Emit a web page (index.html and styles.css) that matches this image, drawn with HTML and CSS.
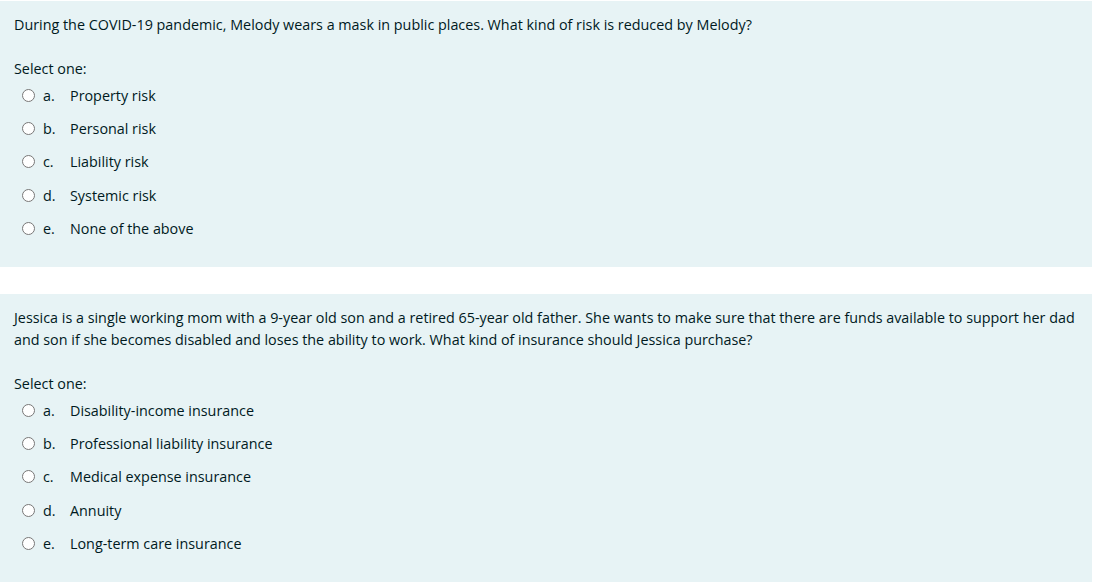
FILE: index.html
```html
<!DOCTYPE html>
<html lang="en">
<head>
<meta charset="utf-8">
<title>Quiz</title>
<link rel="stylesheet" href="styles.css">
</head>
<body>
<div class="que">
  <div class="formulation">
    <div class="qtext">During the COVID-19 pandemic, Melody wears a mask in public places. What kind of risk is reduced by Melody?</div>
    <div class="prompt">Select one:</div>
    <div class="answer">
      <label class="opt"><input type="radio" name="q1"><span class="num">a.</span><span class="lbl">Property risk</span></label>
      <label class="opt"><input type="radio" name="q1"><span class="num">b.</span><span class="lbl">Personal risk</span></label>
      <label class="opt"><input type="radio" name="q1"><span class="num">c.</span><span class="lbl">Liability risk</span></label>
      <label class="opt"><input type="radio" name="q1"><span class="num">d.</span><span class="lbl">Systemic risk</span></label>
      <label class="opt"><input type="radio" name="q1"><span class="num">e.</span><span class="lbl">None of the above</span></label>
    </div>
  </div>
</div>
<div class="que">
  <div class="formulation">
    <div class="qtext">Jessica is a single working mom with a 9-year old son and a retired 65-year old father. She wants to make sure that there are funds available to support her dad and son if she becomes disabled and loses the ability to work. What kind of insurance should Jessica purchase?</div>
    <div class="prompt">Select one:</div>
    <div class="answer">
      <label class="opt"><input type="radio" name="q2"><span class="num">a.</span><span class="lbl">Disability-income insurance</span></label>
      <label class="opt"><input type="radio" name="q2"><span class="num">b.</span><span class="lbl">Professional liability insurance</span></label>
      <label class="opt"><input type="radio" name="q2"><span class="num">c.</span><span class="lbl">Medical expense insurance</span></label>
      <label class="opt"><input type="radio" name="q2"><span class="num">d.</span><span class="lbl">Annuity</span></label>
      <label class="opt"><input type="radio" name="q2"><span class="num">e.</span><span class="lbl">Long-term care insurance</span></label>
    </div>
  </div>
</div>
</body>
</html>
```

FILE: styles.css
```css
html, body {
  margin: 0;
  padding: 0;
  background: #ffffff;
}

body {
  font-family: "Segoe UI", "Open Sans", "Noto Sans", sans-serif;
  font-size: 14.35px;
  color: #001a1e;
  padding-top: 1px;
}

.que {
  margin: 0 3px 27px 0;
}

.formulation {
  background: #e7f3f5;
  padding: 12.5px 5px 21.8px 14px;
}

.qtext {
  line-height: 22px;
  margin-bottom: 22.5px;
}

.prompt {
  line-height: 22px;
  margin-bottom: -1.7px;
}

.answer {
  display: flex;
  flex-direction: column;
}

.opt {
  display: flex;
  align-items: center;
  height: 33.4px;
  padding-left: 8px;
}

.opt input {
  margin: 0 8px 0 0;
  width: 13px;
  height: 13px;
  flex: none;
}

.num {
  width: 27px;
  flex: none;
}

.lbl {
  flex: none;
}
```
